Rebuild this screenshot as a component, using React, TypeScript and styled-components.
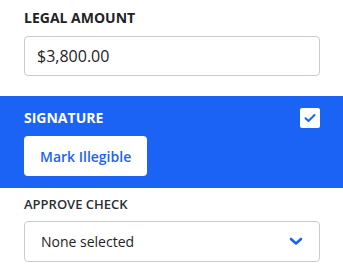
import React, { useState } from 'react';
import styled, { createGlobalStyle } from 'styled-components';

const GlobalStyle = createGlobalStyle`
  html, body {
    margin: 0;
    padding: 0;
    background: #ffffff;
    font-family: 'Open Sans', 'Noto Sans', sans-serif;
    color: #212529;
  }
  * {
    box-sizing: border-box;
  }
`;

const BLUE = '#1a63f5';

const Panel = styled.div`
  width: 343px;
  display: flex;
  flex-direction: column;
`;

const Field = styled.section<{ top: number; bottom: number }>`
  display: flex;
  flex-direction: column;
  padding: ${(p) => p.top}px 23px ${(p) => p.bottom}px 24px;
`;

const Label = styled.label<{ small?: boolean }>`
  display: block;
  font-size: ${(p) => (p.small ? '13px' : '14px')};
  font-weight: ${(p) => (p.small ? 600 : 700)};
  line-height: 20px;
  letter-spacing: 0;
  text-transform: uppercase;
  color: ${(p) => (p.small ? '#2b2f33' : '#1f2226')};
  margin-bottom: ${(p) => (p.small ? '7px' : '8px')};
`;

const TextInput = styled.input`
  width: 100%;
  height: 40px;
  border: 1px solid #c9ccd0;
  border-radius: 4px;
  padding: 0 12px;
  font-family: inherit;
  font-size: 16px;
  color: #1f2226;
  background: #fff;
  outline: none;
`;

const Highlight = styled.section`
  background: ${BLUE};
  padding: 12px 23px 12px 24px;
  display: flex;
  flex-direction: column;
  gap: 8px;
`;

const HeaderRow = styled.div`
  display: flex;
  align-items: center;
  justify-content: space-between;
  height: 20px;
`;

const WhiteLabel = styled.span`
  font-size: 14px;
  font-weight: 700;
  line-height: 20px;
  color: #ffffff;
  text-transform: uppercase;
`;

const CheckBox = styled.button`
  width: 20px;
  height: 20px;
  border: none;
  border-radius: 2px;
  background: #ffffff;
  padding: 0;
  display: flex;
  align-items: center;
  justify-content: center;
  cursor: pointer;
`;

const PlainButton = styled.button`
  align-self: flex-start;
  height: 40px;
  padding: 0 16px;
  border: none;
  border-radius: 4px;
  background: #ffffff;
  color: ${BLUE};
  font-family: inherit;
  font-size: 14px;
  font-weight: 600;
  cursor: pointer;
`;

const Select = styled.div`
  height: 41px;
  border: 1px solid #c9ccd0;
  border-radius: 4px;
  display: flex;
  align-items: center;
  justify-content: space-between;
  padding: 0 16px 0 16px;
  font-size: 14px;
  color: #1f2226;
`;

const Check = () => (
  <svg width="12" height="10" viewBox="0 0 12 10" fill="none">
    <path d="M1.5 5.2 L4.5 8 L10.5 2" stroke={BLUE} strokeWidth="2" strokeLinecap="round" strokeLinejoin="round" />
  </svg>
);

const Chevron = () => (
  <svg width="14" height="9" viewBox="0 0 14 9" fill="none">
    <path d="M2 2 L7 6.5 L12 2" stroke={BLUE} strokeWidth="2.6" strokeLinecap="round" strokeLinejoin="round" />
  </svg>
);

const App: React.FC = () => {
  const [checked, setChecked] = useState(true);
  return (
    <Panel>
      <GlobalStyle />
      <Field top={8} bottom={20}>
        <Label>Legal Amount</Label>
        <TextInput defaultValue="$3,800.00" />
      </Field>
      <Highlight>
        <HeaderRow>
          <WhiteLabel>Signature</WhiteLabel>
          <CheckBox onClick={() => setChecked(!checked)}>{checked && <Check />}</CheckBox>
        </HeaderRow>
        <PlainButton>Mark Illegible</PlainButton>
      </Highlight>
      <Field top={6} bottom={9}>
        <Label small>Approve Check</Label>
        <Select>
          <span>None selected</span>
          <Chevron />
        </Select>
      </Field>
    </Panel>
  );
};

export default App;
